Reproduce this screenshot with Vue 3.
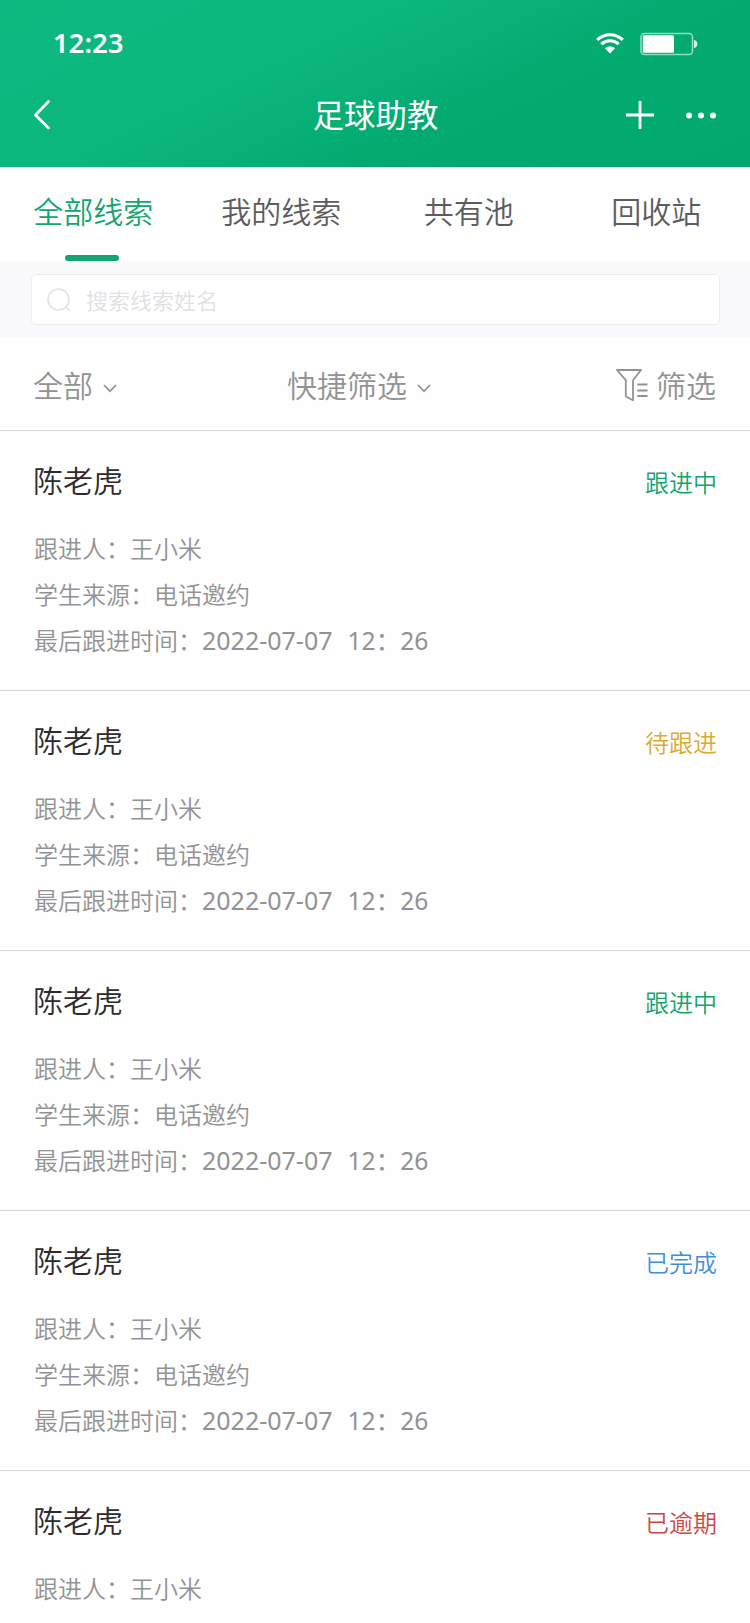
<!-- App.vue -->
<!-- Lead list of the football assistant app: header, tabs, search, filters and cards. -->

<script setup>
import { ref } from 'vue'

const tabs = ['全部线索', '我的线索', '共有池', '回收站']
const activeTab = ref(0)
const keyword = ref('')

// status.type picks the colour of the status text
const details = { source: '电话邀约', date: '2022-07-07', time: '12：26' }
const leads = [
  { id: 1, name: '陈老虎', owner: '王小米', status: { text: '跟进中', type: 'doing' }, ...details },
  { id: 2, name: '陈老虎', owner: '王小米', status: { text: '待跟进', type: 'waiting' }, ...details },
  { id: 3, name: '陈老虎', owner: '王小米', status: { text: '跟进中', type: 'doing' }, ...details },
  { id: 4, name: '陈老虎', owner: '王小米', status: { text: '已完成', type: 'done' }, ...details },
  { id: 5, name: '陈老虎', owner: '王小米', status: { text: '已逾期', type: 'overdue' } },
]
</script>

<template>
  <div class="page">
    <header class="header">
      <div class="status-bar">
        <span class="clock">12:23</span>
        <div class="status-icons">
          <svg class="wifi" width="28" height="21" viewBox="0 0 28 21">
            <path d="M1.2 6.8C8.5 0 19.5 0 26.8 6.8" fill="none" stroke="#fff" stroke-width="3" />
            <path d="M5.3 11.2C10.3 6.7 17.7 6.7 22.7 11.2" fill="none" stroke="#fff" stroke-width="3" />
            <path d="M9 15.2C12 12.9 16 12.9 19 15.2L14 20.6Z" fill="#fff" />
          </svg>
          <svg class="battery" width="58" height="24" viewBox="0 0 58 24">
            <rect x="1" y="1.5" width="51.5" height="21" rx="3.5" fill="none" stroke="#8fdcbf" stroke-width="1.6" />
            <rect x="2.8" y="3.2" width="31.2" height="17.6" rx="1.5" fill="#fff" />
            <path d="M54 8C58.5 8.5 58.5 15.5 54 16Z" fill="#d5f3e7" />
          </svg>
        </div>
      </div>
      <div class="nav-bar">
        <svg class="back" width="18" height="32" viewBox="0 0 18 32">
          <path d="M15.5 2.5L2.5 16L15.5 29" fill="none" stroke="#fff" stroke-width="2.6" stroke-linecap="round" stroke-linejoin="round" />
        </svg>
        <h1 class="title">足球助教</h1>
        <div class="nav-actions">
          <svg width="28" height="28" viewBox="0 0 28 28">
            <path d="M0 14H28M14 0V28" stroke="#fff" stroke-width="2.8" />
          </svg>
          <svg width="30" height="28" viewBox="0 0 30 28">
            <circle cx="3" cy="14.5" r="3" fill="#fff" />
            <circle cx="15" cy="14.5" r="3" fill="#fff" />
            <circle cx="27" cy="14.5" r="3" fill="#fff" />
          </svg>
        </div>
      </div>
    </header>

    <nav class="tabs">
      <div
        v-for="(tab, index) in tabs"
        :key="tab"
        class="tab"
        :class="{ active: index === activeTab }"
        @click="activeTab = index"
      >
        {{ tab }}
      </div>
    </nav>

    <div class="search">
      <label class="search-box">
        <svg width="24" height="24" viewBox="0 0 24 24" fill="none" stroke="#e3e3e8" stroke-width="1.7">
          <circle cx="11.5" cy="11.5" r="10.5" />
          <path d="M18 18.5L23 23" />
        </svg>
        <input v-model="keyword" type="text" placeholder="搜索线索姓名" />
      </label>
    </div>

    <div class="filters">
      <div class="filter">
        <span>全部</span>
        <svg class="arrow" width="14" height="9" viewBox="0 0 14 9">
          <path d="M1 1L7 7.3L13 1" fill="none" stroke="#929294" stroke-width="1.8" />
        </svg>
      </div>
      <div class="filter">
        <span>快捷筛选</span>
        <svg class="arrow" width="14" height="9" viewBox="0 0 14 9">
          <path d="M1 1L7 7.3L13 1" fill="none" stroke="#929294" stroke-width="1.8" />
        </svg>
      </div>
      <div class="filter filter-more">
        <svg class="funnel" width="32" height="33" viewBox="0 0 32 33" fill="none" stroke="#929294" stroke-width="1.8">
          <path d="M1 1H25L17 11.2V31.3L9.8 27.5V11.2Z" stroke-linejoin="round" />
          <path d="M21.3 15.5H31.5M21.3 21.5H31.5M21.3 27H31.5" />
        </svg>
        <span>筛选</span>
      </div>
    </div>

    <main class="list">
      <section v-for="lead in leads" :key="lead.id" class="lead">
        <div class="lead-head">
          <span class="name">{{ lead.name }}</span>
          <span class="status" :class="lead.status.type">{{ lead.status.text }}</span>
        </div>
        <div class="info">跟进人：{{ lead.owner }}</div>
        <div v-if="lead.source" class="info">学生来源：{{ lead.source }}</div>
        <div v-if="lead.date" class="info">
          最后跟进时间：<span class="date">{{ lead.date }}</span><span class="time">{{ lead.time }}</span>
        </div>
      </section>
    </main>
  </div>
</template>

<style>
body {
  background: #fefefe;
}
</style>

<style scoped>
.page {
  width: 750px;
  height: 1623px;
  overflow: hidden;
  background: #fefefe;
  font-family: "Noto Sans CJK SC", sans-serif;
  font-weight: 350;
}

.header {
  height: 167px;
  background: linear-gradient(155deg, #0db980 0%, #0cb77e 36%, #03ab71 62%, #02a86e 100%);
  color: #fff;
}

.status-bar {
  display: flex;
  justify-content: space-between;
  align-items: center;
  height: 87px;
  padding: 0 52px 0 53px;
}

.clock {
  padding-bottom: 2px;
  font-family: "Noto Sans", sans-serif;
  font-size: 27px;
  font-weight: 600;
  letter-spacing: 0.3px;
}

.status-icons {
  display: flex;
  align-items: center;
  gap: 16px;
}

.nav-bar {
  display: grid;
  grid-template-columns: 1fr auto 1fr;
  align-items: center;
  height: 56px;
  padding: 0 34px 0 33px;
}

.title {
  margin: 0;
  padding: 0 0 3px 2px;
  font-size: 31.4px;
  font-weight: 400;
  line-height: 50px;
}

.nav-actions {
  display: flex;
  justify-content: flex-end;
  gap: 32px;
}

.tabs {
  display: grid;
  grid-template-columns: repeat(4, 1fr);
  height: 95px;
}

.tab {
  display: flex;
  flex-direction: column;
  align-items: center;
  padding-top: 19px;
  font-size: 30px;
  line-height: 48px;
  color: #5c5c5e;
}

.tab.active {
  padding-right: 1px;
  color: #14a471;
}

.tab.active::after {
  content: "";
  width: 54px;
  height: 6px;
  margin: 21px 2px 0 0;
  border-radius: 3px;
  background: #14a471;
}

.search {
  height: 75px;
  padding: 12px 30px 12px 31px;
  box-sizing: border-box;
  background: #f9f9fb;
}

.search-box {
  display: flex;
  align-items: center;
  gap: 15px;
  height: 51px;
  padding: 0 15px;
  box-sizing: border-box;
  border: 1.5px solid #ececef;
  border-radius: 5px;
  background: #fff;
}

.search-box input {
  flex: 1;
  padding: 0 0 2px;
  border: none;
  outline: none;
  background: none;
  font: inherit;
  font-size: 22px;
  color: #5c5c5e;
}

.search-box input::placeholder {
  color: #dfdfe4;
}

.filters {
  display: grid;
  grid-template-columns: 254px 1fr auto;
  align-items: center;
  height: 93px;
  padding: 0 34px 0 33px;
  border-bottom: 1px solid #d8d8da;
  font-size: 30px;
  line-height: 48px;
  color: #929294;
}

.filter {
  display: flex;
  align-items: center;
  gap: 10px;
}

.filter-more {
  gap: 8px;
}

.funnel {
  margin-top: 4px;
}

.arrow {
  margin-top: 9px;
}

.lead {
  height: 260px;
  padding: 24px 34px 0;
  box-sizing: border-box;
  border-bottom: 1px solid #d8d8da;
}

.lead-head {
  display: flex;
  justify-content: space-between;
  align-items: center;
  height: 48px;
  margin: 0 -1px 22px;
}

.name {
  font-size: 30px;
  line-height: 48px;
  color: #2b2b2d;
}

.status {
  padding-top: 6px;
  font-size: 24px;
  line-height: 48px;
}

.doing {
  color: #14a471;
}

.waiting {
  color: #d9ab2b;
}

.done {
  color: #3e90dc;
}

.overdue {
  color: #d04545;
}

.info {
  height: 46px;
  font-size: 24px;
  line-height: 46px;
  color: #929294;
}

.date,
.time {
  font-family: "Noto Sans", "Noto Sans CJK SC", sans-serif;
  font-size: 25px;
  font-weight: 400;
}

.date {
  margin-right: 15px;
}

.time {
  font-size: 24.6px;
}
</style>
